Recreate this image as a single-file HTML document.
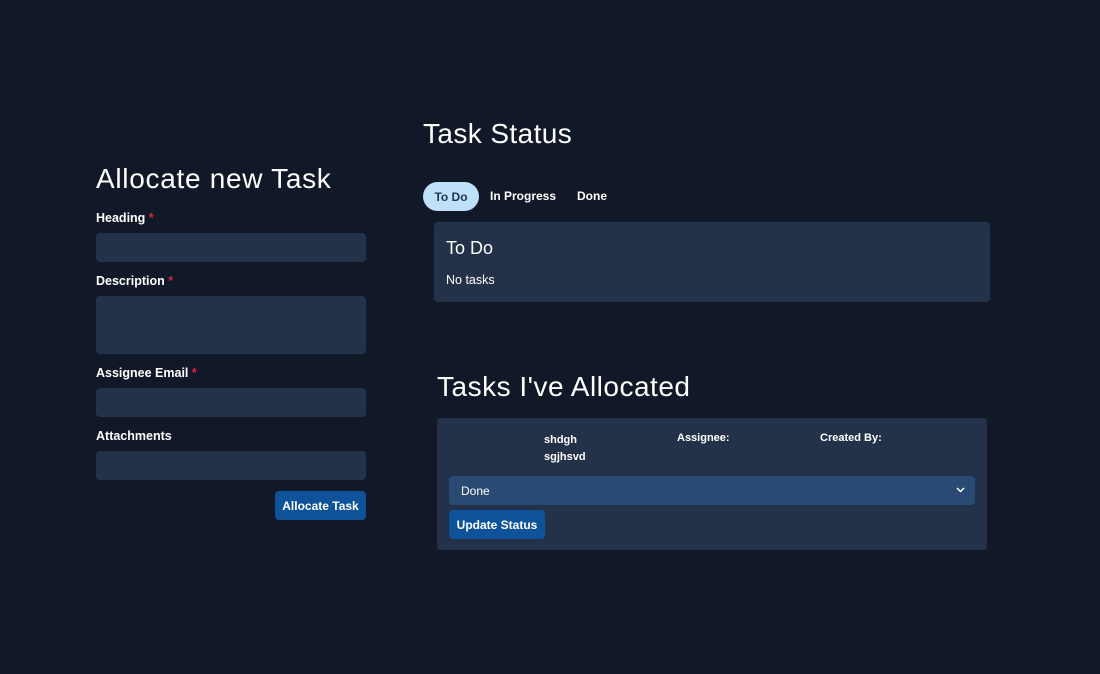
<!DOCTYPE html>
<html><head><style>
*{box-sizing:border-box;margin:0;padding:0}
body{width:1100px;height:674px;background:#111827;font-family:"Liberation Sans",sans-serif;color:#fff;position:relative;overflow:hidden}
.a{position:absolute}
h1{font-weight:500;font-size:28px;letter-spacing:0.5px}
.lbl{font-size:12.5px;font-weight:bold}
.lbl i{color:#e0243a;font-style:normal}
.in{background:#243249;border-radius:4px;width:270px}
.btn{background:#0e5399;border-radius:4px;font-size:12px;font-weight:bold;display:flex;align-items:center;justify-content:center}
.panel{background:#243249;border-radius:4px}
.s{font-size:12px;font-weight:bold}
</style></head><body>
<h1 class="a" style="left:96px;top:163px;letter-spacing:0.7px">Allocate new Task</h1>
<div class="a lbl" style="left:96px;top:211px">Heading <i>*</i></div>
<div class="a in" style="left:96px;top:233px;height:29px"></div>
<div class="a lbl" style="left:96px;top:274px">Description <i>*</i></div>
<div class="a in" style="left:96px;top:296px;height:58px"></div>
<div class="a lbl" style="left:96px;top:366px">Assignee Email <i>*</i></div>
<div class="a in" style="left:96px;top:388px;height:29px"></div>
<div class="a lbl" style="left:96px;top:429px">Attachments</div>
<div class="a in" style="left:96px;top:451px;height:29px"></div>
<div class="a btn" style="left:275px;top:491px;width:91px;height:29px">Allocate Task</div>

<h1 class="a" style="left:423px;top:118px;letter-spacing:0.4px">Task Status</h1>
<div class="a s" style="left:423px;top:182px;width:56px;height:29px;border-radius:15px;background:#bfe0fb;color:#1e3550;display:flex;align-items:center;justify-content:center">To Do</div>
<div class="a s" style="left:490px;top:189px">In Progress</div>
<div class="a s" style="left:577px;top:189px">Done</div>
<div class="a panel" style="left:434px;top:222px;width:556px;height:80px"></div>
<div class="a" style="left:446px;top:238px;font-size:18px">To Do</div>
<div class="a" style="left:446px;top:273px;font-size:12.5px">No tasks</div>

<h1 class="a" style="left:437px;top:371px;letter-spacing:0.5px">Tasks I've Allocated</h1>
<div class="a panel" style="left:437px;top:418px;width:550px;height:132px"></div>
<div class="a" style="left:544px;top:432px;font-size:11px;line-height:17px;font-weight:bold">shdgh<br>sgjhsvd</div>
<div class="a" style="left:677px;top:432px;font-size:11px;font-weight:bold">Assignee:</div>
<div class="a" style="left:820px;top:432px;font-size:11px;font-weight:bold">Created By:</div>
<div class="a" style="left:449px;top:476px;width:526px;height:29px;background:#294b73;border-radius:4px;font-size:12px;padding:8px 12px">Done<svg style="position:absolute;right:10px;top:11px" width="9" height="6" viewBox="0 0 9 6"><path d="M1 1l3.5 3.5L8 1" stroke="#fff" stroke-width="1.5" fill="none"/></svg></div>
<div class="a btn" style="left:449px;top:510px;width:96px;height:29px">Update Status</div>
</body></html>
